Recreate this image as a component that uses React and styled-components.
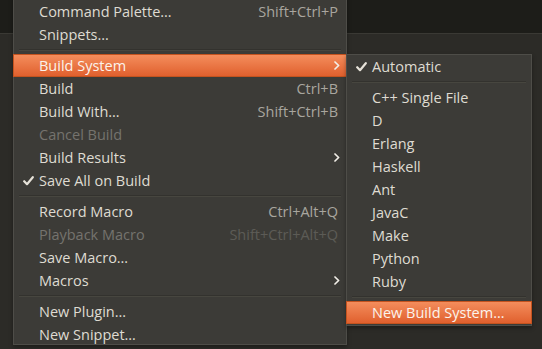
import React from 'react';
import styled, { createGlobalStyle } from 'styled-components';

const GlobalStyle = createGlobalStyle`
    html, body {
        margin: 0;
        padding: 0;
        background: #2c2b27;
    }
    body {
        font-family: "Open Sans", "Noto Sans", sans-serif;
        -webkit-font-smoothing: antialiased;
    }
`;

const mainItems = [
    { label: 'Command Palette…', shortcut: 'Shift+Ctrl+P' },
    { label: 'Snippets…' },
    { sep: true },
    { label: 'Build System', sub: true, active: true },
    { label: 'Build', shortcut: 'Ctrl+B' },
    { label: 'Build With…', shortcut: 'Shift+Ctrl+B' },
    { label: 'Cancel Build', disabled: true },
    { label: 'Build Results', sub: true },
    { label: 'Save All on Build', checked: true },
    { sep: true },
    { label: 'Record Macro', shortcut: 'Ctrl+Alt+Q' },
    { label: 'Playback Macro', shortcut: 'Shift+Ctrl+Alt+Q', disabled: true },
    { label: 'Save Macro…' },
    { label: 'Macros', sub: true },
    { sep: true },
    { label: 'New Plugin…' },
    { label: 'New Snippet…' },
];

const buildItems = [
    { label: 'Automatic', checked: true },
    { sep: true },
    { label: 'C++ Single File' },
    { label: 'D' },
    { label: 'Erlang' },
    { label: 'Haskell' },
    { label: 'Ant' },
    { label: 'JavaC' },
    { label: 'Make' },
    { label: 'Python' },
    { label: 'Ruby' },
    { sep: true },
    { label: 'New Build System…', active: true },
];

function Check() {
    return (
        <svg width="11" height="10" viewBox="0 0 11 10">
            <path d="M1.2 5.2 L4 8.2 L9.8 1.2" fill="none" stroke="#e6e2d9" strokeWidth="2.2" strokeLinecap="round" strokeLinejoin="round" />
        </svg>
    );
}

function Chevron() {
    return (
        <svg width="6" height="9" viewBox="0 0 6 9">
            <path d="M1 1 L4.6 4.5 L1 8" fill="none" stroke="#f2efe8" strokeWidth="1.7" strokeLinecap="round" strokeLinejoin="round" />
        </svg>
    );
}

function MenuList({ items }) {
    return items.map((it, i) =>
        it.sep ? (
            <Separator key={i} />
        ) : (
            <Row key={i} $active={it.active} $disabled={it.disabled}>
                <Mark>{it.checked && <Check />}</Mark>
                <Label>{it.label}</Label>
                {it.shortcut && <Shortcut $disabled={it.disabled}>{it.shortcut}</Shortcut>}
                {it.sub && <Arrow><Chevron /></Arrow>}
            </Row>
        )
    );
}

export default function App() {
    return (
        <>
            <GlobalStyle />
            <Screen>
                <TopBar />
                <MainMenu>
                    <MenuList items={mainItems} />
                </MainMenu>
                <SubMenu>
                    <MenuList items={buildItems} />
                </SubMenu>
            </Screen>
        </>
    );
}

const Screen = styled.div`
    position: relative;
    width: 542px;
    height: 349px;
    overflow: hidden;
    background: #2c2b27;
`;

const TopBar = styled.div`
    height: 33px;
    background: #1d1d19;
    border-bottom: 1px solid #3a3934;
`;

const Menu = styled.div`
    position: absolute;
    box-sizing: border-box;
    background: #3c3b37;
    border: 1px solid #4e4d48;
    box-shadow: 0 2px 4px rgba(0, 0, 0, 0.35);
    display: flex;
    flex-direction: column;
`;

const MainMenu = styled(Menu)`
    left: 13px;
    top: -8px;
    width: 334px;
    height: 353px;
    padding-top: 8px;
    border-top: none;
`;

const SubMenu = styled(Menu)`
    left: 346px;
    top: 54px;
    width: 186px;
    height: 272px;
    padding-top: 0;
    z-index: 2;
`;

const Row = styled.div`
    height: 23px;
    flex: none;
    display: flex;
    align-items: center;
    box-sizing: border-box;
    margin: 0 -1px;
    padding: 0 8px 0 9px;
    font-size: 14.5px;
    color: ${p => (p.$disabled ? '#75736e' : '#dfdbd2')};
    background: ${p => (p.$active ? 'linear-gradient(#f48d5c, #e0602e)' : 'transparent')};
    border: 1px solid ${p => (p.$active ? '#c4531f' : 'transparent')};
    ${p => p.$active && 'color: #fbf3ec;'}
`;

const Mark = styled.span`
    width: 16px;
    flex: none;
    display: flex;
    align-items: center;
`;

const Label = styled.span`
    flex: 1;
    white-space: nowrap;
`;

const Shortcut = styled.span`
    color: ${p => (p.$disabled ? '#5c5b56' : '#a9a69f')};
    white-space: nowrap;
`;

const Arrow = styled.span`
    display: flex;
    align-items: center;
    margin-right: -2px;
`;

const Separator = styled.div`
    height: 8px;
    flex: none;
    margin: 0 5px;
    display: flex;
    flex-direction: column;
    justify-content: center;
    &::before {
        content: '';
        height: 1px;
        background: #33322e;
    }
    &::after {
        content: '';
        height: 1px;
        background: #47463f;
    }
`;
